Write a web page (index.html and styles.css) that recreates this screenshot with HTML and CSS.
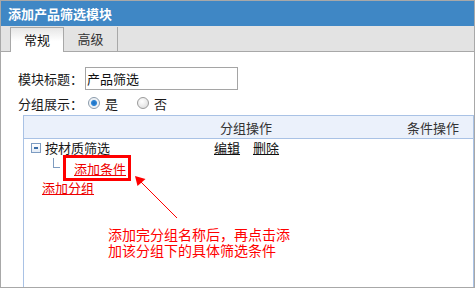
FILE: index.html
```html
<!DOCTYPE html>
<html lang="zh-CN">

<head>
    <meta charset="UTF-8">
    <meta name="viewport" content="width=device-width, initial-scale=1.0">
    <title>添加产品筛选模块</title>
    <link rel="stylesheet" href="styles.css">
</head>

<body>
    <div class="panel">
        <div class="title">添加产品筛选模块</div>
        <ul class="tabs">
            <li class="active">常规</li>
            <li>高级</li>
        </ul>
        <div class="form">
            <div class="row">
                <span class="label">模块标题：</span>
                <input class="text" type="text" value="产品筛选">
            </div>
            <div class="row">
                <span class="label">分组展示：</span>
                <span class="radio checked"></span><span class="opt">是</span>
                <span class="radio"></span><span class="opt">否</span>
            </div>
        </div>
        <div class="grid">
            <div class="head">
                <span></span>
                <span class="col2">分组操作</span>
                <span class="col3">条件操作</span>
            </div>
            <div class="body">
                <div class="group">
                    <span class="name"><i class="fold"></i>按材质筛选</span>
                    <span class="ops"><a href="#">编辑</a><a href="#">删除</a></span>
                </div>
                <div class="child">
                    <i class="branch"></i>
                    <span class="mark"><a href="#" class="red">添加条件</a></span>
                </div>
                <div class="add"><a href="#" class="red">添加分组</a></div>
            </div>
        </div>

        <!-- annotation -->
        <svg class="arrow" width="475" height="288" viewBox="0 0 475 288">
            <line x1="177" y1="218" x2="140" y2="181" stroke="#ff0000" stroke-width="1" />
            <polygon points="135,176 137.5,186 145.5,179" fill="#ff0000" />
        </svg>
        <div class="note">添加完分组名称后，再点击添<br>加该分组下的具体筛选条件</div>
    </div>
</body>

</html>
```

FILE: styles.css
```css
* {
    margin: 0;
    padding: 0;
    list-style: none;
    box-sizing: border-box;
}

body {
    font-family: "Noto Sans CJK SC", "Noto Sans", sans-serif;
    font-size: 13px;
    color: #1a1a1a;
    background: #fff;
}

.panel {
    width: 475px;
    height: 288px;
    border: 1px solid #a8a8a8;
    display: flex;
    flex-direction: column;
    position: relative;
    overflow: hidden;
}

.title {
    height: 25px;
    line-height: 25px;
    padding-left: 7px;
    background: #3f87c5;
    color: #fff;
    font-weight: bold;
}

.tabs {
    height: 26px;
    background: #e3e3e3;
    border-bottom: 1px solid #a8a8a8;
    display: flex;
    align-items: flex-end;
    padding-left: 9px;
}

.tabs li {
    width: 54px;
    height: 24px;
    line-height: 23px;
    text-align: center;
    color: #333;
    border-right: 1px solid #a8a8a8;
}

.tabs li.active {
    height: 25px;
    margin-bottom: -1px;
    color: #111;
    border: 1px solid #a8a8a8;
    border-bottom: none;
    background: linear-gradient(#e6e6e6, #fff 55%);
}

.form {
    padding: 15px 0 0 17px;
}

.row {
    display: flex;
    align-items: center;
    height: 23px;
}

.row+.row {
    height: 20px;
    margin-top: 3px;
}

.label {
    width: 67px;
}

.text {
    width: 153px;
    height: 23px;
    border: 1px solid #a5a5a5;
    padding-left: 1px;
    font: inherit;
    color: #111;
    outline: none;
}

.radio {
    width: 12px;
    height: 12px;
    border-radius: 50%;
    border: 1px solid #9a9a9a;
    background: radial-gradient(circle at 40% 35%, #fff, #d8d8d8);
    margin: 0 5px 0 3px;
}

.radio.checked {
    background: radial-gradient(circle, #1c6fc2 0, #2f86d6 2.5px, #e8eef4 3.5px, #fff 6px);
    border-color: #8a9aaa;
}

.opt {
    margin-right: 16px;
}

.grid {
    flex: 1;
    margin: 2px 0 0 22px;
    border: 1px solid #a9c2e5;
    border-bottom: none;
}

.head {
    height: 23px;
    background: #ebf1fb;
    border-bottom: 1px solid #a9c2e5;
    display: grid;
    grid-template-columns: 190px 1fr auto;
    align-items: center;
    color: #333;
}

.col2 {
    padding-left: 6px;
}

.col3 {
    padding-right: 14px;
}

.body {
    padding-top: 2px;
}

.group {
    display: grid;
    grid-template-columns: 190px 1fr;
    height: 14px;
    line-height: 14px;
}

.name {
    display: flex;
    align-items: center;
    padding-left: 7px;
}

.fold {
    width: 10px;
    height: 10px;
    border: 1px solid #7d9cc2;
    background: linear-gradient(#fff, #e4ecf6);
    margin-right: 4px;
    position: relative;
}

.fold::after {
    content: "";
    position: absolute;
    left: 2px;
    top: 3px;
    width: 4px;
    height: 2px;
    background: #3a6ea8;
}

.ops a {
    color: #111;
    margin-right: 13px;
}

.child {
    display: flex;
    align-items: flex-start;
    padding-left: 29px;
}

.branch {
    width: 7px;
    height: 10px;
    margin: 3px 3px 0 0;
    border-left: 1px solid #7e9cc0;
    border-bottom: 1px solid #7e9cc0;
}

.mark {
    border: 3px solid #ff0000;
    padding: 4px 2px 2px 8px;
    line-height: 14px;
}

.red {
    color: #ee0000;
}

.add {
    padding-left: 18px;
    line-height: 14px;
}

.arrow {
    position: absolute;
    left: -1px;
    top: -1px;
    pointer-events: none;
}

.note {
    position: absolute;
    left: 107px;
    top: 225px;
    font-size: 14px;
    line-height: 16px;
    color: #ff0000;
}
```
